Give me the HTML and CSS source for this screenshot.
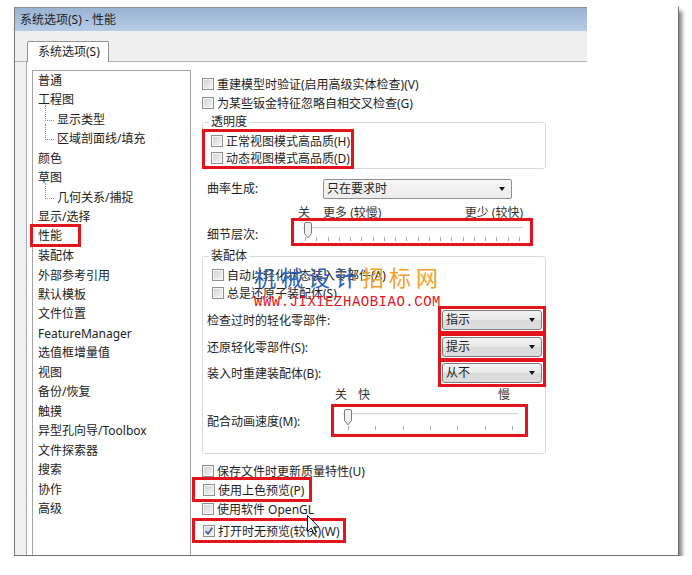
FILE: index.html
```html
<!DOCTYPE html>
<html lang="zh-CN">

    <head>
        <meta charset="UTF-8">
        <meta name="viewport" content="width=device-width, initial-scale=1.0">
        <title>系统选项(S) - 性能</title>
        <link rel="stylesheet" href="styles.css">
    </head>

    <body>
        <div class="sheet">
            <div class="titlebar">系统选项(S) - 性能</div>
            <div class="tabstrip">
                <div class="tab">系统选项(S)</div>
            </div>

            <div class="main">
                <div class="rail"></div>

                <ul class="tree">
                    <li>普通</li>
                    <li>工程图</li>
                    <li class="sub">显示类型</li>
                    <li class="sub">区域剖面线/填充</li>
                    <li>颜色</li>
                    <li>草图</li>
                    <li class="sub">几何关系/捕捉</li>
                    <li>显示/选择</li>
                    <li class="sel"><span>性能</span></li>
                    <li>装配体</li>
                    <li>外部参考引用</li>
                    <li>默认模板</li>
                    <li>文件位置</li>
                    <li>FeatureManager</li>
                    <li>选值框增量值</li>
                    <li>视图</li>
                    <li>备份/恢复</li>
                    <li>触摸</li>
                    <li>异型孔向导/Toolbox</li>
                    <li>文件探索器</li>
                    <li>搜索</li>
                    <li>协作</li>
                    <li>高级</li>
                </ul>

                <div class="options">
                    <div class="check"><span class="box"></span>重建模型时验证(启用高级实体检查)(V)</div>
                    <div class="check"><span class="box"></span>为某些钣金特征忽略自相交叉检查(G)</div>

                    <fieldset class="group">
                        <legend>透明度</legend>
                        <div class="mark trans">
                            <div class="check"><span class="box"></span>正常视图模式高品质(H)</div>
                            <div class="check"><span class="box"></span>动态视图模式高品质(D)</div>
                        </div>
                    </fieldset>

                    <div class="field curve">
                        <span class="label">曲率生成:</span>
                        <div class="combo wide">只在要求时</div>
                    </div>

                    <div class="scale detail-scale">
                        <span class="off">关</span>
                        <span>更多 (较慢)</span>
                        <span class="end">更少 (较快)</span>
                    </div>

                    <div class="field detail">
                        <span class="label">细节层次:</span>
                        <div class="slider mark">
                            <div class="line"></div>
                            <svg class="thumb" width="10" height="17" viewBox="0 0 10 17">
                                <path d="M1.5 2Q1.5 .5 3 .5H7Q8.5 .5 8.5 2V11.5L5 15.8L1.5 11.5Z" fill="#f1f1f1" stroke="#7b7b7b"/>
                            </svg>
                            <div class="ticks">
                                <i></i><i></i><i></i><i></i><i></i><i></i><i></i><i></i><i></i><i></i>
                                <i></i><i></i><i></i><i></i><i></i><i></i><i></i><i></i><i></i><i></i>
                            </div>
                        </div>
                    </div>

                    <fieldset class="group asm">
                        <legend>装配体</legend>
                        <div class="check"><span class="box"></span>自动以轻化状态装入零部件(A)</div>
                        <div class="check"><span class="box"></span>总是还原子装配体(S)</div>

                        <div class="pick">
                            <span>检查过时的轻化零部件:</span>
                            <div class="mark pick-mark"><div class="combo">指示</div></div>
                        </div>
                        <div class="pick">
                            <span>还原轻化零部件(S):</span>
                            <div class="mark pick-mark"><div class="combo">提示</div></div>
                        </div>
                        <div class="pick">
                            <span>装入时重建装配体(B):</span>
                            <div class="mark pick-mark"><div class="combo">从不</div></div>
                        </div>

                        <div class="scale speed-scale">
                            <span class="off">关</span>
                            <span>快</span>
                            <span class="slow">慢</span>
                        </div>

                        <div class="field speed">
                            <span class="label">配合动画速度(M):</span>
                            <div class="slider mark">
                                <div class="line"></div>
                                <svg class="thumb" width="10" height="17" viewBox="0 0 10 17">
                                    <path d="M1.5 2Q1.5 .5 3 .5H7Q8.5 .5 8.5 2V11.5L5 15.8L1.5 11.5Z" fill="#f1f1f1" stroke="#7b7b7b"/>
                                </svg>
                                <div class="ticks">
                                    <i></i><i></i><i></i><i></i><i></i><i></i><i></i>
                                </div>
                            </div>
                        </div>
                    </fieldset>

                    <div class="check first"><span class="box"></span>保存文件时更新质量特性(U)</div>
                    <div class="check mark shade"><span class="box"></span>使用上色预览(P)</div>
                    <div class="check"><span class="box"></span>使用软件 OpenGL</div>
                    <div class="check mark nopre">
                        <span class="box">
                            <svg width="10" height="10" viewBox="0 0 10 10">
                                <path d="M1.6 5.1L4 7.7L8.4 1.8" fill="none" stroke="#3d5a9a" stroke-width="1.6"/>
                            </svg>
                        </span>打开时无预览(较快)(W)
                    </div>
                </div>
            </div>

            <div class="stamp">
                <div class="stamp-name"><span class="blue">机械设计</span><span class="orange">招标网</span></div>
                <div class="stamp-url">WWW.JIXIEZHAOBIAO.COM</div>
            </div>

            <svg class="cursor" width="13" height="20" viewBox="0 0 13 20">
                <path d="M.5 .5V16.5L4.3 12.9L6.9 18.9L9.2 17.9L6.7 12.1H11.8Z" fill="#fff" stroke="#111" stroke-linejoin="round"/>
            </svg>
        </div>
    </body>

</html>
```

FILE: styles.css
```css
* {
    box-sizing: border-box;
    margin: 0;
    padding: 0;
}

body {
    background: #fff;
    color: #1e1e1e;
    font-family: "Noto Sans", "Noto Sans CJK SC", sans-serif;
    font-size: 12px;
}

/* dialog sheet with drop shadow */
.sheet {
    position: relative;
    margin: 7px 0 0 14px;
    width: 665px;
    height: 549px;
    background: #fff;
    border-left: 1px solid #7d7d7d;
    border-right: 1px solid #6f6f6f;
    border-bottom: 1px solid #6f6f6f;
    box-shadow: 3px 4px 4px rgba(0, 0, 0, 0.5);
    display: flex;
    flex-direction: column;
}

.titlebar {
    width: 572px;
    height: 24px;
    border-top: 1px solid #8e8e8e;
    background: linear-gradient(#9ab3d1, #b7cde6);
    padding: 1px 0 0 5px;
    line-height: 22px;
    flex-shrink: 0;
}

.tabstrip {
    width: 572px;
    height: 31px;
    background: #efefef;
    border-bottom: 1px solid #b3b3b3;
    padding-left: 12px;
    display: flex;
    align-items: flex-end;
    flex-shrink: 0;
}

.tab {
    height: 21px;
    margin-bottom: -1px;
    background: #fff;
    border: 1px solid #929292;
    border-bottom: 0;
    border-radius: 2px 2px 0 0;
    padding: 0 8px 0 10px;
    line-height: 20px;
    white-space: nowrap;
}

.main {
    flex: 1;
    display: flex;
    min-height: 0;
}

.rail {
    width: 12px;
    background: #f0f0f0;
    border-right: 1px solid #a8a8a8;
}

/* left tree of option pages */
.tree {
    list-style: none;
    margin: 8px 0 0 5px;
    width: 159px;
    border: 1px solid #a3a3a3;
    border-bottom: 0;
    padding-left: 5px;
    line-height: 19.45px;
    color: #222;
}

.tree li {
    white-space: nowrap;
}

.tree .sub {
    position: relative;
    padding-left: 19px;
}

.tree .sub::before {
    content: '';
    position: absolute;
    left: 7px;
    top: -5px;
    width: 8px;
    height: 15px;
    border-left: 1px dotted #8a8a8a;
    border-bottom: 1px dotted #8a8a8a;
}

.tree .sel span {
    display: inline-block;
    margin-left: -5px;
    padding: 0 16px 0 5px;
    line-height: 17px;
    vertical-align: 1px;
    outline: 3px solid #e3141c;
}

/* right option panel */
.options {
    flex: 1;
    padding-top: 12px;
}

.check {
    display: flex;
    align-items: center;
    gap: 3px;
    height: 19px;
    margin-left: 11px;
    white-space: nowrap;
}

.box {
    width: 12px;
    height: 12px;
    flex-shrink: 0;
    border: 1px solid #8e8f8f;
    background: linear-gradient(135deg, #cdd1d6, #f6f6f6);
    box-shadow: inset 0 0 0 1px #f7f7f7;
    display: flex;
    align-items: center;
    justify-content: center;
}

.mark {
    outline: 3px solid #e3141c;
}

.group {
    margin: 2px 0 0 11px;
    width: 344px;
    border: 1px solid #d3dbe2;
    border-radius: 3px;
    padding: 0 0 0 9px;
}

.group legend {
    padding: 0 2px;
    margin-left: -3px;
    line-height: 16px;
}

.group .check {
    margin-left: 0;
    height: 18px;
}

.trans {
    width: 146px;
    margin: 2px 0 2px -7px;
    padding-left: 6px;
}

.trans .check {
    height: 17px;
}

.field {
    display: flex;
    align-items: flex-start;
}

.label {
    white-space: nowrap;
    line-height: 16px;
}

.curve {
    margin: 10px 0 0 16px;
    align-items: center;
}

.curve .label {
    width: 116px;
}

.combo {
    display: flex;
    align-items: center;
    justify-content: space-between;
    height: 20px;
    border: 1px solid #7c7c7c;
    border-radius: 3px;
    background: linear-gradient(#f4f4f4, #e8e8e8 50%, #dadada 51%, #dedede);
    padding: 0 6px 0 3px;
    line-height: 18px;
}

.combo::after {
    content: '';
    border-left: 3.5px solid transparent;
    border-right: 3.5px solid transparent;
    border-top: 4px solid #111;
}

.combo.wide {
    width: 189px;
    border-color: #8f8f8f;
    border-radius: 2px;
    background: linear-gradient(#f7f7f7, #ececec);
}

.scale {
    display: flex;
    line-height: 14px;
    color: #333;
}

.detail-scale {
    margin: 7px 0 0 107px;
    width: 225px;
}

.detail-scale .off {
    margin-right: 13px;
}

.detail-scale .end {
    margin-left: auto;
}

.detail {
    margin: 1px 0 0 16px;
}

.detail .label {
    width: 87px;
    margin-top: 6px;
}

/* trackbar: rail line, thumb, tick row */
.slider {
    position: relative;
    padding: 6px 7px 0 9px;
}

.detail .slider {
    width: 236px;
    height: 22px;
}

.slider .line {
    height: 2px;
    background: #d6d6d6;
    border-bottom: 1px solid #f4f4f4;
}

.slider .thumb {
    position: absolute;
    left: 9px;
    top: 1px;
}

.ticks {
    display: flex;
    justify-content: space-between;
    margin: 8px 3px 0 2px;
}

.ticks i {
    width: 1px;
    height: 4px;
    background: #a9a9a9;
}

.asm {
    margin-top: 5px;
    padding-bottom: 19px;
}

.asm > .check:first-of-type {
    margin-top: 2px;
}

.pick {
    display: flex;
    align-items: center;
    justify-content: space-between;
    height: 20px;
    margin: 6.5px 2px 0 -5px;
}

.asm .check + .pick {
    margin-top: 8px;
}

.pick-mark {
    padding: 1px;
}

.pick .combo {
    width: 100px;
}

.speed-scale {
    margin: 5px 0 0 123px;
}

.speed-scale .off {
    margin-right: 11px;
}

.speed-scale .slow {
    margin-left: 128px;
}

.speed {
    margin: 5px 0 0 -5px;
}

.speed .label {
    width: 127px;
    margin-top: 7px;
}

.speed .slider {
    width: 191px;
    height: 27px;
}

.speed .slider .thumb {
    top: 2px;
}

.speed .ticks {
    margin: 11px 5px 0 5px;
}

.check.first {
    margin-top: 7px;
}

.shade {
    width: 114px;
    margin-left: 4px;
    padding-left: 8px;
}

.nopre {
    width: 148px;
    margin: 3px 0 0 4px;
    padding-left: 8px;
}

/* site stamp printed over the capture */
.stamp {
    position: absolute;
    left: 239px;
    top: 257px;
    white-space: nowrap;
}

.stamp-name {
    font-family: "Noto Sans CJK SC", sans-serif;
    font-size: 22px;
    line-height: 24px;
    letter-spacing: 5px;
}

.stamp-name .blue {
    color: #2a62b6;
}

.stamp-name .orange {
    color: #f2a02c;
}

.stamp-url {
    margin-top: 7px;
    font-family: "Liberation Mono", monospace;
    font-size: 14px;
    line-height: 14px;
    letter-spacing: 0.5px;
    color: #e5141c;
}

.cursor {
    position: absolute;
    left: 292px;
    top: 508px;
}
```
